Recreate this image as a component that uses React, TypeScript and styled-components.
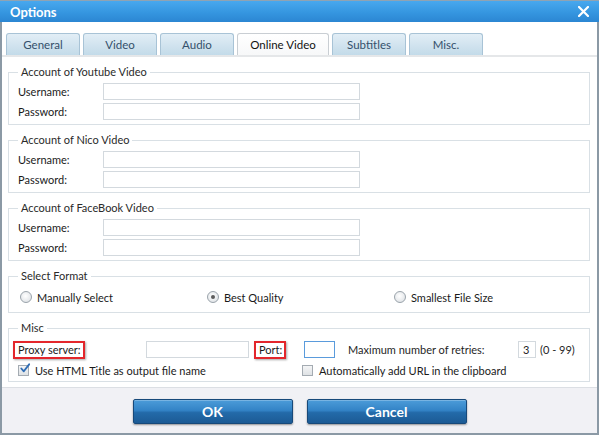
import React from "react";
import styled, { createGlobalStyle } from "styled-components";

const GlobalStyle = createGlobalStyle`
  html, body {
    margin: 0;
    padding: 0;
    background: #ffffff;
  }
  body {
    font-family: Lato, "Liberation Sans", Arial, sans-serif;
    font-size: 11px;
    color: #1f1f1f;
    white-space: nowrap;
  }
`;

const Window = styled.div`
  width: 599px;
  height: 435px;
  display: flex;
  flex-direction: column;
  box-sizing: border-box;
`;

const TitleBar = styled.div`
  height: 22px;
  flex: 0 0 auto;
  display: flex;
  align-items: center;
  justify-content: space-between;
  padding: 0 10px 0 10px;
  box-sizing: border-box;
  border-top: 1px solid #8fa3b3;
  background: linear-gradient(#48a8ee, #3596e0 55%, #2b86d2);
  color: #fff;
  font-weight: 700;
  font-size: 13px;
`;

const CloseButton = styled.button`
  border: 0;
  padding: 0;
  background: transparent;
  display: flex;
  align-items: center;
  cursor: pointer;
`;

const Body = styled.div`
  flex: 1 1 auto;
  display: flex;
  flex-direction: column;
  border: 2px solid #8b99a5;
  border-top: 0;
  background: #fff;
  min-height: 0;
`;

const TabStrip = styled.div`
  display: flex;
  align-items: flex-end;
  gap: 3px;
  margin-top: 11px;
  padding-left: 4px;
  border-bottom: 2px solid #e5e7e9;
`;

const Tab = styled.div<{ $active?: boolean; $w: number }>`
  width: ${(p) => p.$w}px;
  height: 22px;
  box-sizing: border-box;
  display: flex;
  align-items: center;
  justify-content: center;
  border: 1px solid ${(p) => (p.$active ? "#c9ced3" : "#a8c3d6")};
  border-bottom: 0;
  border-radius: 3px 3px 0 0;
  background: ${(p) =>
    p.$active ? "linear-gradient(#ffffff, #f7f8f9)" : "linear-gradient(#e2eef6, #cfe2ee 60%, #c3dbe9)"};
  color: ${(p) => (p.$active ? "#111" : "#34506b")};
  font-size: 11.5px;
`;

const Content = styled.div`
  flex: 1 1 auto;
  display: flex;
  flex-direction: column;
  gap: 9px;
  padding: 9px 7px 0 6px;
`;

const Group = styled.fieldset<{ $pt?: number; $pb?: number }>`
  margin: 0;
  padding: ${(p) => p.$pt ?? 5}px 9px ${(p) => p.$pb ?? 4}px 9px;
  border: 1px solid #d9e0e5;
  display: flex;
  flex-direction: column;
  gap: 3px;
  min-width: 0;
`;

const Legend = styled.legend`
  font-size: 11px;
  line-height: 12px;
  padding: 0 3px;
  margin-left: 0;
  color: #2a2a2a;
`;

const FieldRow = styled.div`
  display: flex;
  align-items: center;
  height: 17px;
`;

const FieldLabel = styled.label`
  width: 85px;
  flex: 0 0 auto;
  color: #1a1a1a;
`;

const TextBox = styled.div<{ $w: number; $focus?: boolean }>`
  width: ${(p) => p.$w}px;
  height: 17px;
  flex: 0 0 auto;
  box-sizing: border-box;
  border: 1px solid ${(p) => (p.$focus ? "#5a9bdc" : "#d3d9de")};
  background: #fff;
  display: flex;
  align-items: center;
  padding-left: 4px;
  font-size: 11px;
`;

const RadioGrid = styled.div`
  display: grid;
  grid-template-columns: 187px 187px 1fr;
  padding-left: 2px;
  height: 14px;
  align-items: center;
`;

const Choice = styled.label`
  display: flex;
  align-items: center;
  gap: 5px;
  color: #1a1a1a;
`;

const RadioDot = styled.span<{ $on?: boolean }>`
  width: 12px;
  height: 12px;
  border-radius: 50%;
  box-sizing: border-box;
  border: 1px solid #9aa3ab;
  background: radial-gradient(circle at 45% 40%, #ffffff, #e4e7ea 70%, #d2d6da);
  display: flex;
  align-items: center;
  justify-content: center;
  &::after {
    content: "";
    width: 4px;
    height: 4px;
    border-radius: 50%;
    background: ${(p) => (p.$on ? "#5c5c5c" : "transparent")};
  }
`;

const MiscRow = styled.div`
  display: flex;
  align-items: center;
  height: 17px;
`;

// fixed-width slot so the next control lands on its column no matter the text width
const Slot = styled.div<{ $w: number; $shift?: number }>`
  width: ${(p) => p.$w}px;
  margin-left: ${(p) => p.$shift ?? 0}px;
  flex: 0 0 auto;
  display: flex;
  align-items: center;
`;

const Marked = styled.span`
  border: 2px solid #e3262b;
  box-shadow: 1px 1px 2px rgba(0, 0, 0, 0.35);
  padding: 0 2px 0 3px;
  height: 18px;
  box-sizing: border-box;
  display: flex;
  align-items: center;
  color: #1a1a1a;
`;

const CheckGrid = styled.div`
  display: grid;
  grid-template-columns: 284px 1fr;
  height: 14px;
  align-items: center;
  margin-top: 2px;
`;

const Box = styled.span`
  width: 11px;
  height: 11px;
  box-sizing: border-box;
  border: 1px solid #a4abb2;
  background: linear-gradient(#f4f5f6, #dfe2e5);
  display: flex;
  align-items: center;
  justify-content: center;
  overflow: visible;
`;

const CheckChoice = styled(Choice)`
  gap: 6px;
`;

const Footer = styled.div`
  flex: 0 0 46px;
  display: flex;
  justify-content: center;
  align-items: flex-start;
  gap: 14px;
  padding-top: 11px;
  box-sizing: border-box;
  border-top: 1px solid #dcdfe4;
  background: #f1f1f5;
`;

const ActionButton = styled.button`
  width: 160px;
  height: 25px;
  border: 1px solid #17497a;
  border-radius: 2px;
  background: linear-gradient(#4c9cd9, #3383c6 45%, #236aa9 55%, #1c5b95);
  box-shadow: 0 1px 2px rgba(0, 0, 0, 0.4), inset 0 1px 0 rgba(255, 255, 255, 0.25);
  color: #fff;
  font-family: Lato, "Liberation Sans", Arial, sans-serif;
  font-weight: 700;
  font-size: 14px;
  cursor: pointer;
`;

const tabs = [
  { name: "General", w: 74 },
  { name: "Video", w: 74 },
  { name: "Audio", w: 74 },
  { name: "Online Video", w: 92, active: true },
  { name: "Subtitles", w: 74 },
  { name: "Misc.", w: 74 },
];

const accounts = ["Youtube", "Nico", "FaceBook"];

const CheckMark = () => (
  <svg width="13" height="13" viewBox="0 0 13 13" style={{ marginTop: -3, marginRight: -3 }}>
    <path d="M2.5 6.5 L5.2 9.5 L11 2" fill="none" stroke="#2f6db5" strokeWidth="2" strokeLinecap="round" strokeLinejoin="round" />
  </svg>
);

export default function App() {
  return (
    <Window>
      <GlobalStyle />
      <TitleBar>
        <span>Options</span>
        <CloseButton aria-label="Close">
          <svg width="11" height="11" viewBox="0 0 11 11">
            <path d="M1 1 L10 10 M10 1 L1 10" stroke="#fff" strokeWidth="2.2" strokeLinecap="square" />
          </svg>
        </CloseButton>
      </TitleBar>
      <Body>
        <TabStrip>
          {tabs.map((t) => (
            <Tab key={t.name} $w={t.w} $active={t.active}>
              {t.name}
            </Tab>
          ))}
        </TabStrip>
        <Content>
          {accounts.map((site) => (
            <Group key={site}>
              <Legend>Account of {site} Video</Legend>
              <FieldRow>
                <FieldLabel>Username:</FieldLabel>
                <TextBox $w={257} />
              </FieldRow>
              <FieldRow>
                <FieldLabel>Password:</FieldLabel>
                <TextBox $w={257} />
              </FieldRow>
            </Group>
          ))}
          <Group $pt={8} $pb={8}>
            <Legend>Select Format</Legend>
            <RadioGrid>
              <Choice>
                <RadioDot />
                Manually Select
              </Choice>
              <Choice>
                <RadioDot $on />
                Best Quality
              </Choice>
              <Choice>
                <RadioDot />
                Smallest File Size
              </Choice>
            </RadioGrid>
          </Group>
          <Group $pt={7} $pb={4}>
            <Legend>Misc</Legend>
            <MiscRow>
              <Slot $w={133} $shift={-5}>
                <Marked>Proxy server:</Marked>
              </Slot>
              <Slot $w={108}>
                <TextBox $w={103} />
              </Slot>
              <Slot $w={50}>
                <Marked>Port:</Marked>
              </Slot>
              <Slot $w={44}>
                <TextBox $w={31} $focus />
              </Slot>
              <Slot $w={170}>Maximum number of retries:</Slot>
              <Slot $w={22}>
                <TextBox $w={18}>3</TextBox>
              </Slot>
              <span>(0 - 99)</span>
            </MiscRow>
            <CheckGrid>
              <CheckChoice>
                <Box>
                  <CheckMark />
                </Box>
                Use HTML Title as output file name
              </CheckChoice>
              <CheckChoice>
                <Box />
                Automatically add URL in the clipboard
              </CheckChoice>
            </CheckGrid>
          </Group>
        </Content>
        <Footer>
          <ActionButton>OK</ActionButton>
          <ActionButton>Cancel</ActionButton>
        </Footer>
      </Body>
    </Window>
  );
}
